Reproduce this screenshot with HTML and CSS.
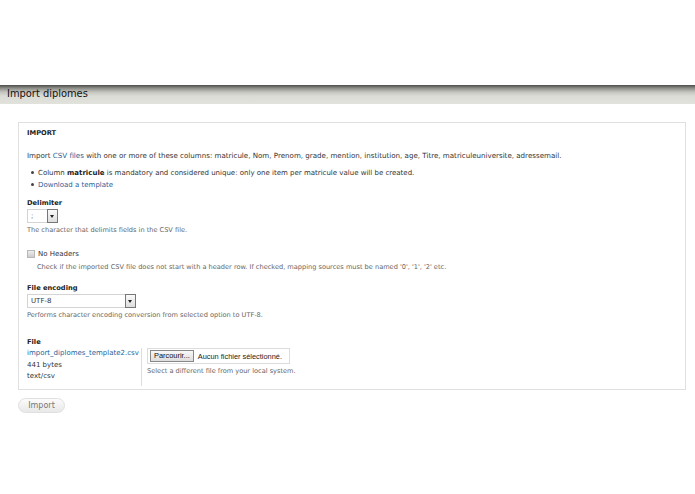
FILE: index.html
```html
<!DOCTYPE html>
<html>
<head>
<meta charset="utf-8">
<link rel="stylesheet" href="styles.css">
</head>
<body>
<div class="page">
  <div class="titlebar"><h1 class="title">Import diplomes</h1></div>
  <div class="content">
    <div class="fieldset">
      <div class="legend">IMPORT</div>
      <p class="intro">Import <a href="#">CSV files</a> with one or more of these columns: matricule, Nom, Prenom, grade, mention, institution, age, Titre, matriculeuniversite, adressemail.</p>
      <ul class="list">
        <li>Column <b>matricule</b> is mandatory and considered unique: only one item per matricule value will be created.</li>
        <li><a href="#">Download a template</a></li>
      </ul>
      <div class="item">
        <div class="label">Delimiter</div>
        <div class="select small"><span class="val">;</span><span class="arrow"></span></div>
        <div class="desc">The character that delimits fields in the CSV file.</div>
      </div>
      <div class="item check">
        <div class="checkrow"><span class="box"></span><span>No Headers</span></div>
        <div class="desc indent">Check if the imported CSV file does not start with a header row. If checked, mapping sources must be named '0', '1', '2' etc.</div>
      </div>
      <div class="item enc">
        <div class="label">File encoding</div>
        <div class="select wide"><span class="val">UTF-8</span><span class="arrow"></span></div>
        <div class="desc">Performs character encoding conversion from selected option to UTF-8.</div>
      </div>
      <div class="item file">
        <div class="label">File</div>
        <div class="filerow">
          <div class="fileinfo">
            <a href="#">import_diplomes_template2.csv</a>
            <div>441 bytes</div>
            <div>text/csv</div>
          </div>
          <div class="fileupload">
            <div class="fileinput"><span class="browse">Parcourir...</span><span class="none">Aucun fichier sélectionné.</span></div>
            <div class="desc">Select a different file from your local system.</div>
          </div>
        </div>
      </div>
    </div>
    <div class="actions"><span class="button">Import</span></div>
  </div>
</div>
</body>
</html>
```
FILE: styles.css
```css
html, body { margin: 0; padding: 0; background: #fff; }
body { font-family: "DejaVu Sans", Verdana, sans-serif; color: #333; font-size: 7px; }
a { text-decoration: none; color: #1f5f9a; }
.page { padding-top: 85px; }
.titlebar {
  height: 19px;
  background: linear-gradient(to bottom, #4a4a48 0px, #8a8a86 3px, #c4c4be 7px, #dcdcd6 11px, #e2e2dc 19px);
}
.title { margin: 0; padding: 1px 0 0 7px; font-size: 9.9px; font-weight: normal; color: #111; line-height: 15px; }
.content { padding: 18px 9px 0 18px; }
.fieldset { border: 1px solid #e0e0e0; padding: 6px 8px 3px 8px; }
.legend { font-weight: bold; font-size: 6.7px; color: #222; line-height: 10px; margin-top: -1px; }
.intro { margin: 13px 0 0; line-height: 10px; font-size: 7.1px; }
.list { margin: 6px 0 0; padding: 0 0 0 11px; list-style: none; line-height: 12px; }
.list li { position: relative; }
.list li::before { content: ""; position: absolute; left: -7px; top: 4px; width: 3px; height: 3px; border-radius: 50%; background: #444; }
.list b { color: #222; }
.item { margin-top: 7px; }
.label { font-weight: bold; color: #222; line-height: 10px; font-size: 6.7px; }
.select { display: flex; height: 12px; border: 1px solid #d4d4d4; margin-top: 1px; background: #fff; }
.select .val { flex: 1; padding-left: 3px; line-height: 12px; color: #666; }
.select.small { width: 29px; }
.select.wide { width: 107px; }
.select .arrow { width: 9px; border: 1px solid #777; background: linear-gradient(#fafafa, #ddd); position: relative; margin: -1px -1px -1px 0; }
.select .arrow::after { content: ""; position: absolute; left: 2px; top: 5px; border-left: 2.5px solid transparent; border-right: 2.5px solid transparent; border-top: 3px solid #222; }
.select.wide .val { color: #333; }
.desc { color: #666; line-height: 10px; margin-top: 2px; font-size: 6.6px; }
.check { margin-top: 14px; }
.checkrow { display: flex; align-items: center; gap: 3px; line-height: 10px; color: #333; }
.box { width: 6px; height: 6px; border: 1px solid #b8b8b8; background: linear-gradient(#eee, #ccc); }
.desc.indent { padding-left: 10px; margin-top: 3px; }
.item.enc { margin-top: 11px; }
.item.file { margin-top: 17px; }
.filerow { display: flex; margin-top: 1px; }
.fileinfo { width: 114px; line-height: 11.5px; border-right: 1px solid #ddd; padding-bottom: 3px; font-size: 7px; }
.fileinfo a { display: block; white-space: nowrap; }
.fileupload { padding-left: 5px; padding-top: 0; }
.fileinput { display: flex; align-items: center; width: 139px; height: 14px; border: 1px solid #ddd; padding-left: 2px; gap: 4px; }
.browse { border: 1px solid #888; background: linear-gradient(#f8f8f8, #ddd); padding: 0 3px; line-height: 10px; color: #111; font-family: "Liberation Sans", Arial, sans-serif; font-size: 7.4px; }
.none { font-family: "Liberation Sans", Arial, sans-serif; color: #222; font-size: 7.4px; }
.fileupload .desc { margin-top: 2px; }
.actions { padding-top: 8px; }
.button { display: inline-block; width: 45px; height: 13px; border: 1px solid #e0e0e0; border-radius: 8px; background: linear-gradient(#fcfcfc, #e8e8e8); text-align: center; line-height: 14px; color: #777; font-size: 8px; }
```
